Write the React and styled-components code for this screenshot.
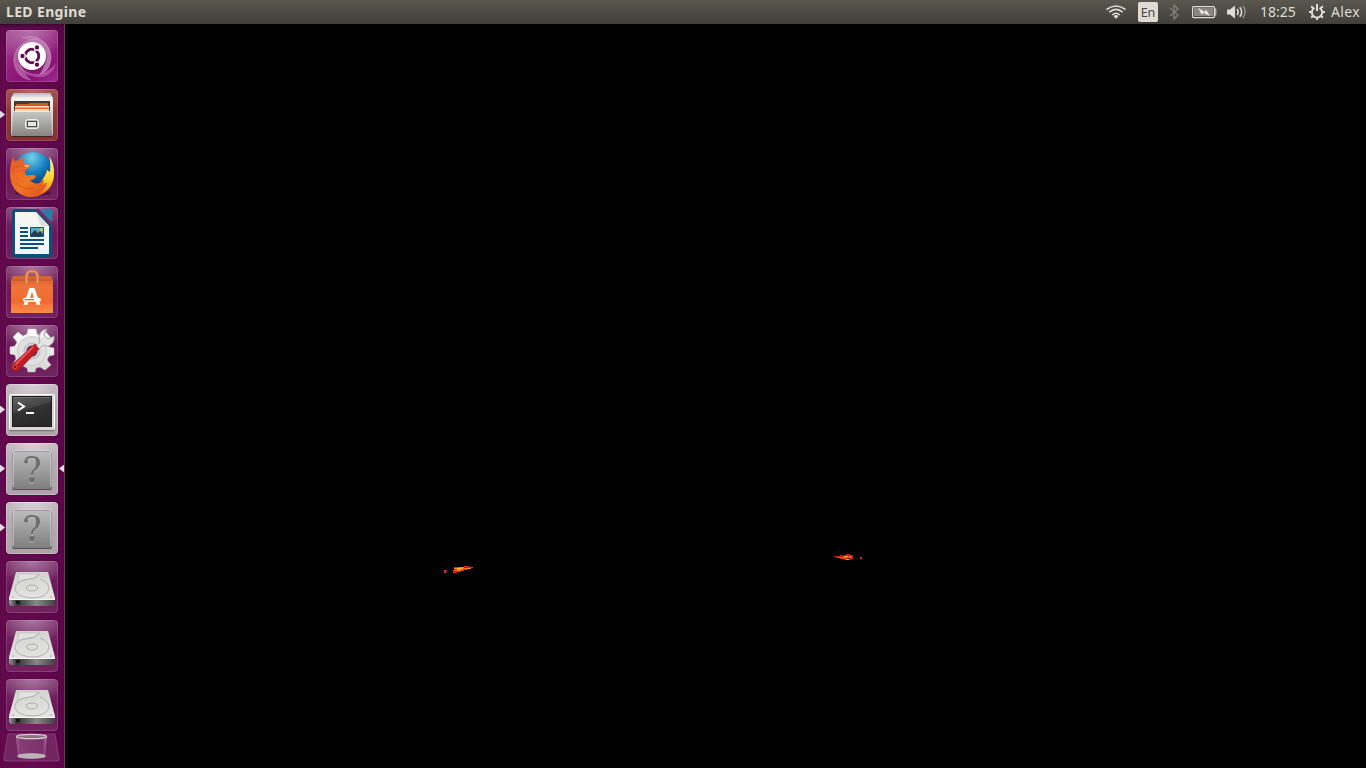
import React from "react";
import styled, { createGlobalStyle } from "styled-components";

const Global = createGlobalStyle`
  * { box-sizing: border-box; }
  body { margin: 0; background: #000; overflow: hidden; font-family: "Noto Sans", "Open Sans", sans-serif; }
  svg { display: block; flex: none; }
`;
const Desktop = styled.div`
  width: 1366px;
  height: 768px;
  display: flex;
  flex-direction: column;
  background: #000;
`;
const Panel = styled.header`
  height: 24px;
  flex: none;
  display: flex;
  justify-content: space-between;
  padding: 0 5px 0 6px;
  background: linear-gradient(#59574e, #403f3a);
  color: #dfdbd2;
`;
const Title = styled.div`
  font-size: 14px;
  font-weight: 700;
  line-height: 23px;
  letter-spacing: 0.35px;
`;
const Indicators = styled.div`
  display: flex;
  align-items: center;
`;
const Indicator = styled.div`
  width: ${(p) => p.$w}px;
  height: 24px;
  flex: none;
`;
const PanelText = styled.div`
  width: ${(p) => p.$w}px;
  flex: none;
  white-space: nowrap;
  font-size: 14px;
  line-height: 24px;
  letter-spacing: ${(p) => p.$ls || 0}px;
`;
const Keyboard = styled.div`
  width: 20px;
  height: 20px;
  margin-right: 10px;
  border-radius: 2px;
  background: #dfdbd2;
  color: #45443f;
  font-size: 12.5px;
  line-height: 21px;
  text-align: center;
`;
const Body = styled.div`
  flex: 1;
  min-height: 0;
  display: flex;
`;
const Launcher = styled.nav`
  width: 65px;
  flex: none;
  display: flex;
  flex-direction: column;
  gap: 7px;
  padding-top: 6px;
  overflow: hidden;
  border-right: 1px solid #802b59;
  background: linear-gradient(90deg, #61094c, #650950 50%, #5c0649);
  box-shadow: inset 0 4px 4px -3px #2c0524;
`;
const Slot = styled.div`
  height: 52px;
  flex: none;
  display: flex;
  align-items: center;
`;
const Pip = styled.i`
  width: ${(p) => (p.$right ? 5 : 6)}px;
  height: 8px;
  flex: none;
  background: ${(p) => (p.$on ? "#e3dce2" : "transparent")};
  margin: -1px 0 0 ${(p) => (p.$right ? 1 : 0)}px;
  clip-path: ${(p) => (p.$right ? "polygon(100% 0, 100% 100%, 0 50%)" : "polygon(0 0, 85% 50%, 0 100%)")};
`;
const tones = {
  dash: "radial-gradient(ellipse 75% 60% at 45% 0, #b673ab, transparent), linear-gradient(145deg, #a34895 0, #93207d 45%, #8a1275 75%, #a12b90)",
  files: "radial-gradient(ellipse 70% 50% at 50% 0, #b06a6c, transparent), linear-gradient(#98403f, #833332)",
  plain: "radial-gradient(ellipse 65% 45% at 50% 0, #a878a0, transparent), linear-gradient(#7b316a, #6c1558 55%, #712460)",
  light: "radial-gradient(ellipse 60% 50% at 50% 0, #d9d1d7, transparent), linear-gradient(#bcb0b9, #ada2aa)",
};
const Tile = styled.div`
  width: 52px;
  height: 52px;
  flex: none;
  border-radius: 4px;
  background: ${(p) => tones[p.$tone]};
  box-shadow: inset 0 0 0 1px rgba(255, 255, 255, ${(p) => (p.$tone === "light" ? 0.28 : 0.14)}), 0 0 2px #44063a;
`;
const TrashSlot = styled.div`
  height: 30px;
  flex: none;
  margin: -6px 0 0 3px;
`;
const Viewport = styled.main`
  position: relative;
  flex: 1;
  background: #000;
`;
const Flame = styled.svg`
  position: absolute;
  left: ${(p) => p.$x}px;
  top: ${(p) => p.$y}px;
`;

const Icon = ({ children }) => <svg width="52" height="52" viewBox="0 0 52 52">{children}</svg>;

const Ubuntu = () => (
  <Icon>
    <defs>
      <linearGradient id="swirlA" x1="0" y1="0" x2="1" y2=".5">
        <stop stopColor="#fff" stopOpacity=".05" /><stop offset="1" stopColor="#fff" stopOpacity=".4" />
      </linearGradient>
      <linearGradient id="swirlB" x1="0" y1="1" x2="1" y2="0">
        <stop stopColor="#fff" stopOpacity=".35" /><stop offset="1" stopColor="#fff" stopOpacity=".03" />
      </linearGradient>
    </defs>
    <path d="M15 8C31 2 46 14 45 29C44 38 39 43 34 44C42 33 42 14 15 8Z" fill="url(#swirlA)" />
    <path d="M15 8C31 2 46 14 45 29C44 38 39 43 34 44" fill="none" stroke="#e4b5dc" strokeOpacity=".45" strokeWidth=".8" />
    <path d="M32 9C19 8 7 18 8 32C9 42 16 49 25 50C14 40 8 21 32 9Z" fill="url(#swirlB)" />
    <path d="M32 9C19 8 7 18 8 32C9 42 16 49 25 50" fill="none" stroke="#e4b5dc" strokeOpacity=".4" strokeWidth=".8" />
    <path d="M12 29C15 46 37 50 50 33C48 44 37 50 26 46C17 44 12 37 12 29Z" fill="#e7b3dd" opacity=".35" />
    <circle cx="26.2" cy="27" r="14.7" fill="#741060" opacity=".5" />
    <circle cx="26" cy="26" r="14" fill="#fff" />
    <circle cx="26" cy="26" r="6.8" fill="none" stroke="#640b4e" strokeWidth="2.8" />
    <path d="M21 26H17M28.5 21.7L31 17.4M28.5 30.3L31 34.6" stroke="#fff" strokeWidth="1.3" />
    <g fill="#640b4e" stroke="#fff" strokeWidth="1.2"><circle cx="16.5" cy="26" r="2.8" /><circle cx="31" cy="17.4" r="2.8" /><circle cx="31" cy="34.6" r="2.8" /></g>
  </Icon>
);

const Files = () => (
  <Icon>
    <defs>
      <linearGradient id="cab" x2="0" y2="1"><stop stopColor="#c8c8c6" /><stop offset="1" stopColor="#858584" /></linearGradient>
      <linearGradient id="cabTop" x2="0" y2="1"><stop stopColor="#b9b9b7" /><stop offset=".13" stopColor="#f4f4f2" /><stop offset="1" stopColor="#b5b5b2" /></linearGradient>
    </defs>
    <path d="M8 4H44L47 9V45Q47 47 45 47H7Q5 47 5 45V9Z" fill="url(#cabTop)" />
    <path d="M8 12H44V23H8Z" fill="#473b35" />
    <path d="M10 15H22L24 14H42V22H10Z" fill="#c76026" />
    <path d="M9 17H43V22H9Z" fill="#f4ddb8" /><path d="M9 18.5H43V20H9Z" fill="#f06a25" />
    <path d="M7 22H45L46 47H6Z" fill="url(#cab)" /><path d="M7 22.5H45" stroke="#e9e9e7" />
    <rect x="19.5" y="30.5" width="13" height="9" rx="2" fill="#b7b7b5" stroke="#eee" />
    <rect x="21.5" y="32.5" width="9" height="5" fill="#e5e5e3" stroke="#4d4d4b" />
    <path d="M6 47.5H46" stroke="#47201f" />
  </Icon>
);

const Firefox = () => (
  <Icon>
    <defs>
      <radialGradient id="globe" cx=".47" cy=".14" r=".75"><stop stopColor="#75d0eb" /><stop offset=".5" stopColor="#147fbe" /><stop offset="1" stopColor="#082f70" /></radialGradient>
      <linearGradient id="fox" x1="0" y1="0" x2="1" y2="1"><stop stopColor="#e4582a" /><stop offset=".5" stopColor="#f07622" /><stop offset="1" stopColor="#d9471e" /></linearGradient>
      <linearGradient id="tail" x1="0" y1="0" x2="0" y2="1"><stop stopColor="#fff1a1" /><stop offset=".6" stopColor="#ffd52e" /><stop offset="1" stopColor="#ed7720" /></linearGradient>
    </defs>
    <ellipse cx="27" cy="45" rx="18" ry="3" fill="#35052b" opacity=".5" />
    <circle cx="27" cy="24" r="20" fill="url(#globe)" />
    <path d="M7 9L9 13Q14 12 18 9Q17 13 18 16L25 17Q25 19 21 21L19 23Q19 25 20 27C24 28 27 26 30 28Q29 32 24 32C28 37 34 36 37 32C39 30 40 28 40 26L44 29L48 24C48 57 4 57 4 26Q4 15 7 9Z" fill="url(#fox)" />
    <path d="M43 8Q49 17 48 27Q47 42 34 46Q41 39 41 34L37 37L38 31L34 34Q40 28 41 22L44 24Q45 15 43 8Z" fill="url(#tail)" />
    <path d="M6 23Q9 18 15 18L24 18L20 22L15 23M9 34Q17 43 29 40" stroke="#bd3c1c" strokeWidth=".7" fill="none" opacity=".6" />
    <path d="M18 17L24 17.5L22 19L19 18.5Z" fill="#f7c895" />
  </Icon>
);

const Writer = () => (
  <Icon>
    <path d="M9 2H33L46 16V48Q46 50 44 50H8Q6 50 6 48V5Q6 2 9 2Z" fill="#09507f" />
    <path d="M34 2H46V15Z" fill="#267fab" /><path d="M31 2L46 18" stroke="#7c285f" strokeWidth="2" />
    <path d="M9 5H30L43 19V47H9Z" fill="#f5f5f4" /><path d="M30 5L43 19H35Z" fill="#dededc" />
    <path d="M14 21H22M14 25H22M14 29H22M14 33H38M14 37H38M14 41H32" stroke="#07527f" strokeWidth="2" />
    <path d="M24.5 20.5H37.5V29.5H24.5Z" fill="#5aadd0" stroke="#07527f" strokeWidth="1" />
    <path d="M25 29V27L29 23L32 26L34 24L37 27V29Z" fill="#303d40" /><circle cx="35.5" cy="22.5" r="1.5" fill="#f3c833" />
  </Icon>
);

const Software = () => (
  <Icon>
    <defs><linearGradient id="bag" x2="0" y2="1"><stop stopColor="#d36034" /><stop offset=".3" stopColor="#ee7438" /><stop offset=".7" stopColor="#f16a30" /><stop offset="1" stopColor="#f68848" /></linearGradient></defs>
    <path d="M7 10H45L47 14V47H5V14Z" fill="url(#bag)" /><path d="M5 14H47" stroke="#a84728" opacity=".6" />
    <path d="M20.5 18V10Q21 5 26 5Q31 5 31.5 10V18" fill="none" stroke="#d27248" strokeWidth="3.5" />
    <path d="M20.5 17V10Q21 5 26 5Q31 5 31.5 10V17" fill="none" stroke="#f2a27b" strokeWidth="1.2" />
    <path d="M23.5 22H28.5L34.5 39H30.6L29.6 36H22.4L21.4 39H17.5ZM26 26L23.6 33H28.4Z" fill="#fff" fillRule="evenodd" />
    <rect x="17" y="31.7" width="18" height="4" rx="2" fill="#fff" /><path d="M18.5 33.7H28" stroke="#ec6731" strokeWidth="1.3" />
    <path d="M5 38H47V47H5Z" fill="#ff984f" opacity=".15" />
  </Icon>
);

const Settings = () => (
  <Icon>
    <defs>
      <linearGradient id="gear" x2="0" y2="1"><stop stopColor="#fff" /><stop offset="1" stopColor="#d3d4d4" /></linearGradient>
      <linearGradient id="handle" x1="0" y1="0" x2="1" y2="1"><stop stopColor="#ef5754" /><stop offset=".45" stopColor="#ca1f25" /><stop offset="1" stopColor="#8e1118" /></linearGradient>
    </defs>
    <path d="M21 9L22 4H30L31 9L35 11L40 7L45 13L42 18L43 22L48 23V30L43 31L41 35L45 40L39 45L34 42L30 43L29 47H22L21 43L17 41L12 44L7 39L10 34L9 30L4 29V22L9 21L11 17L7 12L12 7L17 11Z" fill="url(#gear)" stroke="#d1cfd1" strokeWidth=".5" />
    <circle cx="26" cy="26" r="14.5" fill="#dfe0e0" stroke="#c8caca" /><circle cx="26" cy="26" r="8" fill="#d1d0d1" stroke="#bbb" />
    <circle cx="26" cy="26" r="5.5" fill="#712c63" />
    <path d="M27 24L34 17Q31 9 37 5L41 4L38 10L42 14L48 11Q49 18 43 21Q40 22 37 20L30 27Z" fill="#e4e4e4" stroke="#999" strokeWidth=".8" />
    <path d="M37 7Q35 9 36 13" fill="none" stroke="#fff" strokeWidth="1.3" />
    <path d="M29 19L33 24L14 44Q9 48 6 44Q4 41 8 38Z" fill="url(#handle)" stroke="#8b1620" strokeWidth=".6" />
    <path d="M27 22L10 39" stroke="#ef6864" strokeWidth="1.3" /><circle cx="9" cy="42" r="1.8" fill="#711523" stroke="#df6160" strokeWidth=".7" />
  </Icon>
);

const Terminal = () => (
  <Icon>
    <defs><linearGradient id="screen" x1="0" y1="0" x2=".4" y2="1"><stop stopColor="#626262" /><stop offset=".48" stopColor="#444" /><stop offset=".5" stopColor="#333" /><stop offset="1" stopColor="#292929" /></linearGradient></defs>
    <rect x="3.5" y="10.5" width="45" height="35" rx="1" fill="#d7d7d6" stroke="#fafafa" />
    <path d="M4 46.5H48" stroke="#777" strokeWidth="1.3" />
    <rect x="6.5" y="12.5" width="39" height="30" fill="url(#screen)" stroke="#202020" />
    <path d="M8 13.5H44" stroke="#898989" opacity=".5" />
    <path d="M12 18.5L18 22.5L12 26.5" fill="none" stroke="#fff" strokeWidth="2" /><path d="M20 29H28" stroke="#fff" strokeWidth="2" />
  </Icon>
);

const Unknown = () => (
  <Icon>
    <defs><linearGradient id="unknown" x2="0" y2="1"><stop stopColor="#bdbdbd" /><stop offset="1" stopColor="#7d7d7d" /></linearGradient></defs>
    <rect x="6.5" y="8.5" width="39" height="38" rx="1" fill="url(#unknown)" stroke="#686868" />
    <path d="M7 44V8H45V44" fill="none" stroke="#dedede" strokeWidth=".9" />
    <path d="M7 46.5H45" stroke="#505050" />
    <path d="M20 19Q20 14 26 14Q33 14 33 20Q33 24 28 27Q26 29 26 33" transform="translate(0 1)" stroke="#c3c3c3" strokeWidth="2" fill="none" opacity=".6" />
    <path d="M20 18Q20 14 26 14Q33 14 33 20Q33 24 28 27Q26 29 26 32" stroke="#6d6d6d" strokeWidth="2" fill="none" />
    <path d="M29 14Q35 15 33 22L29 26Q31 20 29 14Z" fill="#6d6d6d" /><circle cx="20" cy="18.5" r="1.9" fill="#6d6d6d" />
    <circle cx="26" cy="37.8" r="2.8" fill="#bbb" /><circle cx="26" cy="36.8" r="2.8" fill="#6d6d6d" />
  </Icon>
);

const Drive = () => (
  <Icon>
    <defs><linearGradient id="drive" x2=".2" y2="1"><stop stopColor="#d1d1d0" /><stop offset="1" stopColor="#e4e4e3" /></linearGradient><linearGradient id="edge"><stop stopColor="#999" /><stop offset=".17" stopColor="#333" /><stop offset=".6" stopColor="#888" /><stop offset="1" stopColor="#414141" /></linearGradient></defs>
    <path d="M10 11H42L49 38V43L47 45H5L3 43V38Z" fill="url(#edge)" />
    <path d="M10 11H42L49 37V39H3V37Z" fill="url(#drive)" /><path d="M3 38.5H49" stroke="#f8f8f7" />
    <path d="M12 13H31Q32 17 24 18Q16 18 11 22L13 17Z" fill="#e2e2e1" stroke="#bbbbba" strokeWidth=".7" />
    <path d="M34 18Q43 21 43 28Q41 36 28 37Q12 37 9 29Q8 24 15 20Q23 18 28 17Q31 15 34 13" fill="none" stroke="#b3b3b2" strokeWidth="1" />
    <ellipse cx="26" cy="27" rx="5.7" ry="3" fill="none" stroke="#adadac" strokeWidth="1" />
    <path d="M10 40H14V43H10Z" fill="#151515" /><g fill="#8b8b8a"><circle cx="7" cy="36" r=".7" /><circle cx="45" cy="36" r=".7" /></g>
  </Icon>
);

const Trash = () => (
  <svg width="58" height="30" viewBox="0 0 58 30">
    <defs><linearGradient id="bin"><stop stopColor="#dbbad4" stopOpacity=".5" /><stop offset=".12" stopColor="#9f6594" stopOpacity=".4" /><stop offset=".85" stopColor="#8c4f80" stopOpacity=".3" /><stop offset="1" stopColor="#e0c1da" stopOpacity=".55" /></linearGradient></defs>
    <path d="M5 2H52L56 26Q57 29 54 29H3Q0 29 1 26Z" fill="#732562" stroke="#98558a" strokeOpacity=".6" />
    <path d="M13 4H44L42 23Q38 27 28.5 27Q19 27 15 23Z" fill="url(#bin)" />
    <ellipse cx="28.5" cy="24" rx="14" ry="2.2" fill="#bcb0b8" stroke="#d5cbd1" strokeWidth=".8" />
    <ellipse cx="28.5" cy="4.5" rx="15" ry="2.2" fill="#89737f" stroke="#d9ced6" strokeWidth="1.3" />
  </svg>
);

const Wifi = () => <svg width="24" height="24" viewBox="0 0 24 24"><g fill="none" stroke="#dfdbd2" strokeWidth="1.6"><path d="M2.5 9.5Q12 2.5 21.5 9.5" /><path d="M5.3 12.2Q12 6.7 18.7 12.2" /><path d="M8.2 15Q12 11.5 15.8 15" /></g><path d="M9.5 16Q12 14.2 14.5 16L12 19Z" fill="#dfdbd2" /></svg>;
const Bluetooth = () => <svg width="12" height="24" viewBox="0 0 12 24"><path d="M2 8L10 15L6 19V5L10 9L2 16" fill="none" stroke="#83817a" strokeWidth="1.3" /></svg>;
const Battery = () => <svg width="26" height="24" viewBox="0 0 26 24"><rect x=".6" y="6.6" width="21.8" height="11" rx="1" fill="none" stroke="#dfdbd2" strokeWidth="1.2" /><path d="M23 9H23.8V15H23" fill="none" stroke="#dfdbd2" /><rect x="2" y="8" width="19" height="8" fill="#898780" /><path d="M6 8L13 12L14 9.5L18 16L11 12.7L10 15Z" fill="#eeeae0" /></svg>;
const Sound = () => <svg width="22" height="24" viewBox="0 0 22 24"><path d="M0 9.5H3L8 5.5V18.5L3 14.5H0Z" fill="#dfdbd2" /><g fill="none" stroke="#dfdbd2" strokeWidth="1.6"><path d="M10 9Q12.3 12 10 15" /><path d="M12.8 7.2Q16.5 12 12.8 16.8" /><path d="M15.7 5.8Q20.8 12 15.7 18.2" stroke="#8b8982" /></g></svg>;
const Session = () => <svg width="18" height="24" viewBox="0 0 18 24"><path d="M6 7.8A5.2 5.2 0 1 0 11 7.8" transform="translate(.5 0)" fill="none" stroke="#dfdbd2" strokeWidth="2" /><path d="M9 4V11M3.2 6.2L5.2 8.2M14.8 6.2L12.8 8.2M1 12H4M14 12H17M3.2 17.8L5.2 15.8M14.8 17.8L12.8 15.8M9 17V20" stroke="#dfdbd2" strokeWidth="2" /></svg>;

const apps = [
  ["dash", Ubuntu], ["files", Files, true], ["plain", Firefox], ["plain", Writer],
  ["plain", Software], ["plain", Settings], ["light", Terminal, true],
  ["light", Unknown, true, true], ["light", Unknown, true],
  ["plain", Drive], ["plain", Drive], ["plain", Drive],
];

export default function App() {
  return (
    <Desktop>
      <Global />
      <Panel>
        <Title>LED Engine</Title>
        <Indicators>
          <Indicator $w={34}><Wifi /></Indicator>
          <Keyboard>En</Keyboard>
          <Indicator $w={24}><Bluetooth /></Indicator>
          <Indicator $w={35}><Battery /></Indicator>
          <Indicator $w={33}><Sound /></Indicator>
          <PanelText $w={48}>18:25</PanelText>
          <Indicator $w={23}><Session /></Indicator>
          <PanelText $w={30} $ls={0.4}>Alex</PanelText>
        </Indicators>
      </Panel>
      <Body>
        <Launcher>
          {apps.map(([tone, Art, running, focused], i) => (
            <Slot key={i}>
              <Pip $on={running} />
              <Tile $tone={tone}><Art /></Tile>
              <Pip $on={focused} $right />
            </Slot>
          ))}
          <TrashSlot><Trash /></TrashSlot>
        </Launcher>
        <Viewport>
          <Flame $x={377} $y={541} width="34" height="9" shapeRendering="crispEdges">
            <path d="M2 5H5V7H4V8H2Z" fill="#d22c17" />
            <path d="M12 2H22V1H27V2H31V3H29V4H26V5H22V6H19V7H15V8H11V5H12Z" fill="#e52f0c" />
            <path d="M12 3H17V2H23V3H29V4H21V5H18V6H13V5H15V4H12Z" fill="#ff7f24" />
            <path d="M12 6H15V7H12ZM22 2H26V3H22Z" fill="#a91508" /><path d="M15 3H19V4H15Z" fill="#ffc34a" />
          </Flame>
          <Flame $x={768} $y={529} width="31" height="9" shapeRendering="crispEdges">
            <path d="M7 2H13V1H17V2H20V6H18V7H11V6H7V5H4V4H1V3H7Z" fill="#c91c0b" />
            <path d="M4 4H10V3H14V4H19V5H13V6H9V5H4Z" fill="#f34c1b" />
            <path d="M11 3H15V4H11ZM16 3H18V4H16ZM13 6H16V7H13Z" fill="#ff9e35" />
            <path d="M9 2H11V3H9ZM15 5H17V6H15Z" fill="#64100a" /><path d="M27 4H29V6H27Z" fill="#d92716" />
          </Flame>
        </Viewport>
      </Body>
    </Desktop>
  );
}
